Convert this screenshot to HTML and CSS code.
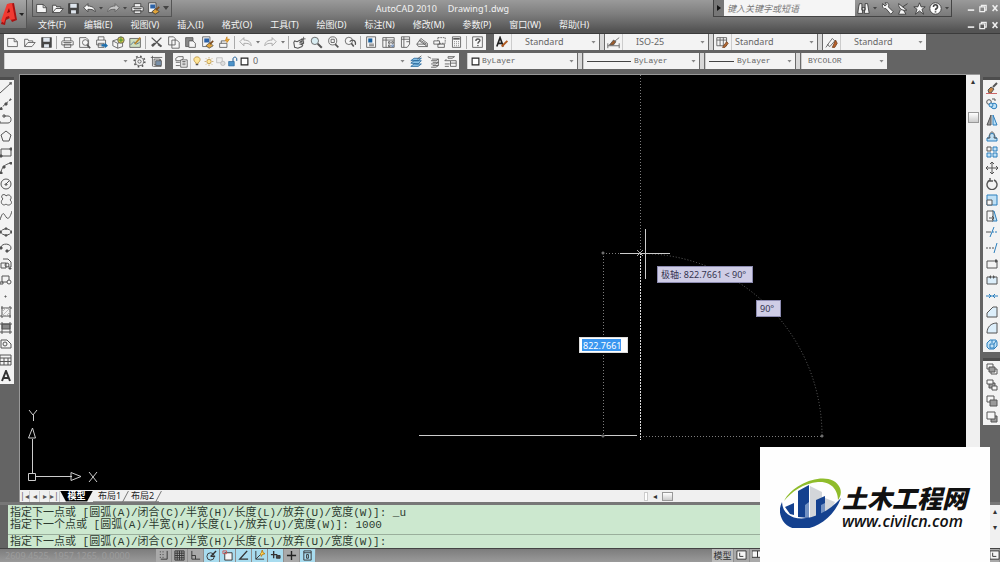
FILE: index.html
```html
<!DOCTYPE html>
<html lang="zh-CN">
<head>
<meta charset="utf-8">
<title>AutoCAD 2010 - Drawing1.dwg</title>
<link rel="stylesheet" href="styles.css">
</head>
<body>
<svg class="defs" aria-hidden="true">
<symbol id="new" viewBox="0 0 16 16"><path class="p" d="M2 3h8l4 4v6H2z"/><path d="M10 3v4h4"/></symbol>
<symbol id="open" viewBox="0 0 16 16"><path class="p" d="M2 13V4h4l1 2h5v2"/><path class="p" d="M2 13l4-5h9l-4 5z"/></symbol>
<symbol id="save" viewBox="0 0 16 16"><path class="d" d="M2 2h12v12H2z"/><path fill="#dfe6ee" stroke="none" d="M4 2h8v5H4zM5 10h6v4H5z"/></symbol>
<symbol id="undo" viewBox="0 0 16 16"><path class="p" d="M1 7l5-5v3c6 0 9 3 9 7-2-3-5-3-9-3v3z"/></symbol>
<symbol id="redo" viewBox="0 0 16 16"><path class="p" d="M15 7l-5-5v3c-6 0-9 3-9 7 2-3 5-3 9-3v3z"/></symbol>
<symbol id="print" viewBox="0 0 16 16"><path class="p" d="M4 6V2h8v4M2 6h12q1 0 1 1v4H1V7q0-1 1-1zM4 10h8v4H4z"/><path d="M3 8h10"/></symbol>
<symbol id="preview" viewBox="0 0 16 16"><path class="p" d="M2 2h8l3 3v9H2z"/><circle class="p" cx="9" cy="8" r="3.5"/><path stroke-width="2" d="M11 11l4 4"/></symbol>
<symbol id="publish" viewBox="0 0 16 16"><path class="p" d="M4 5V1h7v4M2 5h11v6H2zM4 9h7v5H4z"/><path fill="#1d6fae" stroke="none" d="M8 10h4V8l4 4-4 3v-2H8z"/></symbol>
<symbol id="dwf" viewBox="0 0 16 16"><path class="p" d="M1 6l6-2 6 3v6l-6 2-6-3z"/><path d="M1 6l6 3v6M7 9l6-2"/><circle cx="11" cy="5" r="4" fill="#d9c54a"/><path stroke="#2f8a3a" d="M8 5h6M11 1v7"/></symbol>
<symbol id="markup" viewBox="0 0 16 16"><path fill="#cfe0c0" d="M1 3h13v11H1z"/><path stroke="#468" d="M2 11l4-4 3 3 4-2"/><path stroke="#b8862b" stroke-width="2" d="M7 10l7-8"/></symbol>
<symbol id="cut" viewBox="0 0 16 16"><path stroke-width="1.6" d="M2 2l12 11M14 2L3 13"/><path stroke-width="2.400" d="M2 12l4-3M14 13l-4-3"/></symbol>
<symbol id="copy" viewBox="0 0 16 16"><path class="p" d="M2 1h6l2 2v8H2zM6 5h6l3 3v7H6z"/></symbol>
<symbol id="paste" viewBox="0 0 16 16"><path fill="#888" d="M2 2h9v11H2z"/><path class="p" d="M6 6h5l3 3v5H6z"/></symbol>
<symbol id="match" viewBox="0 0 16 16"><path class="p" d="M2 1h9v12H2z"/><path fill="#2b62a8" stroke="none" d="M4 3h6v5H4z"/><path fill="#e0a43a" d="M6 12l5-4 4 4-5 3z"/><path stroke="#7a4a1e" stroke-width="2" d="M11 10l4-4"/></symbol>
<symbol id="block" viewBox="0 0 16 16"><path class="p" d="M2 9h9v5H2z"/><path d="M4 9V6h5"/><path fill="#f0b040" stroke="#c88420" d="M11 1v3h3l-3 4V6H9z"/></symbol>
<symbol id="pan" viewBox="0 0 16 16"><path class="p" stroke-width="1.300" d="M1 8l1-2 3 1 6-3 1 1-4 3 5-1v2l-4 1 3 1-1 2-5 2-4-1z"/><path d="M13 1v5M10.500 3.500h5"/></symbol>
<symbol id="zoom" viewBox="0 0 16 16"><circle fill="#d9edf2" cx="6" cy="6" r="4.500"/><path stroke-width="2.400" d="M9.500 9.500l5 5"/></symbol>
<symbol id="zoomw" viewBox="0 0 16 16"><circle class="p" cx="7" cy="6" r="5"/><path d="M5 4h4v4H5z"/><path stroke-width="2" d="M10 10l4 4"/></symbol>
<symbol id="zoomp" viewBox="0 0 16 16"><circle class="p" cx="6" cy="6" r="4.500"/><path stroke-width="2" d="M9 9l3 4"/><path stroke-width="1.500" d="M7 7c4-4 8-1 7 4"/></symbol>
<symbol id="props" viewBox="0 0 16 16"><path class="p" d="M2 1h11v13H2z"/><path fill="#195f9d" stroke="none" d="M4 3h5v5H4z"/><path d="M5 10h6M5 12h6"/></symbol>
<symbol id="dc" viewBox="0 0 16 16"><path class="p" d="M1 2h14v12H1z"/><path d="M1 5h14M5 2v12M8 7h2v2H8zM12 7h2v2h-2zM8 11h2v2H8z"/><path stroke="#57a" d="M12 11h2v2h-2z"/></symbol>
<symbol id="palette" viewBox="0 0 16 16"><path class="p" d="M3 1h10v9l-3 4H3z"/><path d="M6 1v13M3 4h10M9 7h4"/></symbol>
<symbol id="sheet" viewBox="0 0 16 16"><path class="p" d="M1 10l5-7 8 6v4H3z"/><path d="M1 10h9l4 3M4 6l8 5M5 5l8 5"/></symbol>
<symbol id="sset" viewBox="0 0 16 16"><path class="p" d="M6 2h9v7H6z" stroke-dasharray="2 1"/><path class="p" d="M1 6h7v4H1zM6 10h8v4H6z"/></symbol>
<symbol id="calc" viewBox="0 0 16 16"><path class="p" d="M3 1h10v13H3z"/><path stroke-width="2" d="M4 3.500h8"/><path stroke-dasharray="1 1.500" d="M5 7h7M5 9.500h7M5 12h7"/></symbol>
<symbol id="qmark" viewBox="0 0 16 16"><path class="p" d="M2 1h12v13H2z"/><path stroke-width="1.700" d="M6 6c0-3 5-3 5-.5C11 7 8.500 7 8.500 9.500M8.500 11v1.500"/></symbol>
<symbol id="tstyle" viewBox="0 0 16 16"><path stroke="#222" stroke-width="2" d="M1 13L5 2l4 11M3 9h5"/><path stroke="#b05a20" stroke-width="2.400" d="M7 13l7-7"/></symbol>
<symbol id="dstyle" viewBox="0 0 16 16"><path d="M1 9v6M15 9v6M1 12h14"/><path fill="#9a5b2c" d="M3 11l5-6 3 2-3 4z"/><path d="M10 6l5-4"/></symbol>
<symbol id="table2" viewBox="0 0 16 16"><path class="p" d="M1 2h12v10H1z"/><path d="M1 5h12M5 2v10M9 2v10"/><path fill="#b66b34" stroke="#74401c" d="M8 14l5-7 2 2-4 5z"/></symbol>
<symbol id="mstyle" viewBox="0 0 16 16"><path class="p" d="M3 11l6-8 3 3-6 7z"/><path d="M1 14l3-4"/><path fill="#b8602a" stroke="#74401c" d="M9 14l4-9 2 4-3 5z"/></symbol>
<symbol id="gear" viewBox="0 0 16 16"><circle cx="8" cy="8" r="5"/><circle cx="8" cy="8" r="2"/><circle cx="8" cy="8" r="6.500" stroke-dasharray="2 3.100" stroke-width="2"/></symbol>
<symbol id="ws" viewBox="0 0 16 16"><path d="M1 3h14M3 1v13M5 5h7v7H5zM13 5v9M4 14h10"/><path fill="#7990a8" d="M7 7h7v6H7z"/></symbol>
<symbol id="layers" viewBox="0 0 16 16"><path class="p" d="M1 4l3-2h6v3l-3 2H1zM1 9h5M1 13h5"/><path class="p" d="M7 6h8v9H7z"/><path d="M9 8h4M9 10h4M9 12h4"/></symbol>
<symbol id="bulb" viewBox="0 0 16 16"><path fill="#ffe69a" stroke="#a87a20" d="M6 11c0-2-3-3-3-6 0-6 10-6 10 0 0 3-3 4-3 6z"/><path stroke-width="2" d="M6 13h4"/></symbol>
<symbol id="sun" viewBox="0 0 16 16"><circle fill="#ffe69a" stroke="#a87a20" cx="8" cy="8" r="3.500"/><path stroke="#a87a20" d="M8 1v2M8 13v2M1 8h2M13 8h2M3 3l1.500 1.500M11.500 11.500L13 13M3 13l1.500-1.500M11.500 4.500L13 3"/></symbol>
<symbol id="vp" viewBox="0 0 16 16"><path stroke="#aaa" fill="#eee" d="M1 2h9v8H1z"/><circle stroke="#aaa" fill="#ddd" cx="11" cy="11" r="3.500"/></symbol>
<symbol id="lock" viewBox="0 0 16 16"><path stroke="#1d5c94" fill="#4b92c8" d="M1 8h9v7H1z"/><path stroke="#1d5c94" stroke-width="1.600" d="M8 8V4c0-4 6-4 6 0v3"/></symbol>
<symbol id="sq" viewBox="0 0 16 16"><path fill="#fff" stroke="#222" stroke-width="2" d="M2 2h12v12H2z"/></symbol>
<symbol id="lay1" viewBox="0 0 16 16"><path fill="#8cc4e8" stroke="#23659a" d="M1 7l4-3h9l-4 3zM1 10l4-3h9l-4 4zM1 14l4-3h9l-4 3z"/><path d="M9 5l5-4"/></symbol>
<symbol id="lay2" viewBox="0 0 16 16"><path d="M1 2l4 2M6 5h8l-3 2H5M7 9h7l-3 2H5M7 13h7l-3 2H5M14 5v8"/></symbol>
<symbol id="lay3" viewBox="0 0 16 16"><path d="M5 2h8l-3 2H5zM1 7h7M1 11h6M1 14h5M3 5L1 7"/><path class="p" d="M8 7h7v7H8z"/><path d="M8 10h7"/></symbol>
<symbol id="bino" viewBox="0 0 16 16"><path class="p" d="M3 2h3v4l1 8H1l1-8zM10 2h3l2 12H9l1-8zM6 7h4v3H6z"/></symbol>
<symbol id="wrench" viewBox="0 0 16 16"><path class="p" d="M2 2l3 3 2-2-2-2c5-1 5 3 4 5l6 6-3 3-6-7C3 9 1 6 2 2z"/></symbol>
<symbol id="sat" viewBox="0 0 16 16"><path class="p" d="M2 2c0 6 4 9 10 8zM7 6l6-4M4 10l-2 5h9L8 10"/></symbol>
<symbol id="star" viewBox="0 0 16 16"><path class="p" d="M8 1l2 5h5l-4 3 2 6-5-4-5 4 2-6-4-3h5z"/></symbol>
<symbol id="help" viewBox="0 0 16 16"><circle cx="8" cy="8" r="7" fill="#fff"/><path stroke="#444" stroke-width="2" d="M5.500 6c0-4 5-3 5 0C10.500 8 8 8 8 10M8 11.500v1.500"/></symbol>
<symbol id="min" viewBox="0 0 10 10"><path stroke="#eee" stroke-width="2" d="M1 7h8"/></symbol>
<symbol id="max" viewBox="0 0 10 10"><path stroke="#eee" stroke-width="1.500" d="M3 3V1h6v6H7M1 3h6v6H1z"/></symbol>
<symbol id="x" viewBox="0 0 10 10"><path stroke="#eee" stroke-width="2" d="M2 1l6 7M8 1L2 8"/></symbol>
<symbol id="line" viewBox="0 0 12 12"><path d="M0 11L11 1M10 0h2v2h-2z"/></symbol>
<symbol id="cline" viewBox="0 0 12 12"><path d="M0 11L11 1" stroke-dasharray="3 1"/><path class="d" d="M5 5h2v2H5zM10 1h1v1h-1zM0 10h2v2H0z"/></symbol>
<symbol id="pline" viewBox="0 0 12 12"><path d="M4 2h4c4 0 4 7 0 7H0V7M3 1h2v2H3z"/></symbol>
<symbol id="poly" viewBox="0 0 12 12"><path d="M6 1l5 4-2 6H3L1 5z"/></symbol>
<symbol id="rect" viewBox="0 0 12 12"><path d="M1 3h10v7H1z"/><path class="d" d="M10 2h2v2h-2zM0 9h2v2H0z"/></symbol>
<symbol id="arc" viewBox="0 0 12 12"><path d="M1 11C1 6 5 2 11 1"/><path class="d" d="M0 10h2v2H0zM3 4h2v2H3zM10 0h2v2h-2z"/></symbol>
<symbol id="circ" viewBox="0 0 12 12"><circle cx="6" cy="6" r="5"/><path d="M6 6l3-3M5 6h2v1H5z"/></symbol>
<symbol id="cloud" viewBox="0 0 12 12"><path d="M3 5C-1 1 5-1 6 2c3-3 7 1 4 4 4 3-1 7-4 4-3 3-7-2-3-5z"/></symbol>
<symbol id="spl" viewBox="0 0 12 12"><path d="M0 10C3 0 4 4 6 7s4 1 6-6"/></symbol>
<symbol id="ell" viewBox="0 0 12 12"><ellipse cx="6" cy="6" rx="5" ry="3"/><path class="d" d="M5 2h2v1H5zM0 5h1v2H0zM11 5h1v2h-1zM5 9h2v1H5z"/></symbol>
<symbol id="ella" viewBox="0 0 12 12"><path d="M1 5c1-4 10-4 10 1 0 2-2 3-4 3"/><path class="d" d="M0 5h2v2H0zM6 8h2v2H6z"/></symbol>
<symbol id="ins" viewBox="0 0 12 12"><path d="M3 1h5l3 3v5H8M1 5h5v5H1z"/><circle cx="7" cy="7" r="2"/><path class="d" d="M9 10h2v1H9z"/></symbol>
<symbol id="mkb" viewBox="0 0 12 12"><path d="M2 2h7v6H2zM0 8h3v2H0z"/><circle class="p" cx="9" cy="8" r="2"/></symbol>
<symbol id="pt" viewBox="0 0 12 12"><path d="M5 6h1v1H5z"/></symbol>
<symbol id="hatch" viewBox="0 0 12 12"><path d="M1 2h11M0 10h11M2 0v12M10 0v12"/><path stroke="#bbb" d="M2 10l8-8M2 6l4-4M6 10l4-4"/></symbol>
<symbol id="grad" viewBox="0 0 12 12"><path fill="#888" d="M2 2h8v5H2z"/><path d="M0 2h12M0 10h12M2 0v12M10 0v12"/></symbol>
<symbol id="region" viewBox="0 0 12 12"><path d="M1 2h6l4 4v4H1z"/><circle cx="5" cy="6" r="2"/></symbol>
<symbol id="tbl" viewBox="0 0 12 12"><path d="M0 1h11v10H0zM0 4h11M4 4v7M8 4v7M0 7.500h11"/></symbol>
<symbol id="txt" viewBox="0 0 12 12"><path stroke="#333" stroke-width="2" d="M2 11L6 1l4 10M3 8h6"/></symbol>
<symbol id="erase" viewBox="0 0 12 12"><path fill="#c58345" d="M2 8l3-3 3 2-3 4H3z"/><path stroke="#555" stroke-width="2" d="M7 5l4-4"/><path stroke="#c66" d="M0 11.500h11"/></symbol>
<symbol id="cp" viewBox="0 0 12 12"><circle cx="3" cy="4" r="2.300"/><circle class="b" cx="8" cy="8" r="2.800"/><path d="M6 1h3v2"/><circle class="b" cx="5" cy="7" r="2"/></symbol>
<symbol id="mir" viewBox="0 0 12 12"><path fill="#999" d="M5 1v10H1z"/><path class="b" d="M7 1v10h4z"/></symbol>
<symbol id="off" viewBox="0 0 12 12"><path class="b" d="M1 11V8h2C2 2 10 2 9 8h2v3z"/><path d="M1 8h3C2 0 10 0 8 8h3"/></symbol>
<symbol id="arr" viewBox="0 0 12 12"><path d="M1 1h4v4H1z"/><path class="b" d="M7 1h4v4H7zM1 7h4v4H1zM7 7h4v4H7z"/></symbol>
<symbol id="mov" viewBox="0 0 12 12"><path d="M6 0v12M0 6h12M4 2l2-2 2 2M4 10l2 2 2-2M2 4L0 6l2 2M10 4l2 2-2 2"/></symbol>
<symbol id="rot" viewBox="0 0 12 12"><path stroke-width="1.400" d="M4 2a5 5 0 1 0 4 0M4 0v3h3"/></symbol>
<symbol id="scl" viewBox="0 0 12 12"><path class="b" d="M1 1h10v10H1z"/><path class="p" d="M1 6h5v5H1z"/></symbol>
<symbol id="str" viewBox="0 0 12 12"><path class="b" d="M6 1h2l3 10H6z"/><path class="p" d="M1 1h6v10H1z"/><path d="M3 8h5M6 6l2 2-2 2"/></symbol>
<symbol id="trim" viewBox="0 0 12 12"><path d="M0 6h5"/><path stroke="#2b7fbd" d="M4 11L8 1"/><path stroke="#2b7fbd" stroke-dasharray="2 1" d="M6 6h6"/></symbol>
<symbol id="ext" viewBox="0 0 12 12"><path stroke-dasharray="2 1" d="M0 6h8"/><path stroke="#2b7fbd" d="M8 11l3-10"/></symbol>
<symbol id="bpt" viewBox="0 0 12 12"><path d="M8 3H1v7h10V3"/><path class="d" d="M9 2h2v2H9z"/></symbol>
<symbol id="brk" viewBox="0 0 12 12"><path class="pb" d="M4 3H1v7h10V3H8"/><path class="d" d="M4 2h1v2H4zM7 2h1v2H7z"/></symbol>
<symbol id="join" viewBox="0 0 12 12"><path stroke="#2b7fbd" d="M0 6h12M3 4l2 2-2 2M9 4L7 6l2 2"/></symbol>
<symbol id="cham" viewBox="0 0 12 12"><path class="pb" d="M1 11V7l6-6h4v10z"/></symbol>
<symbol id="fil" viewBox="0 0 12 12"><path class="pb" d="M1 11C1 5 5 1 11 1v10z"/></symbol>
<symbol id="expl" viewBox="0 0 12 12"><path class="b" d="M1 5l3-3h6l1 2v4l-3 3H3L1 9zM4 6h4v4H4zM6 2v3M10 3L8 6"/></symbol>
<symbol id="o1" viewBox="0 0 12 12"><path class="p" d="M1 1h6v5H1zM5 6h6v5H5z"/><path fill="#999" d="M3 4h6v5H3z"/></symbol>
<symbol id="o2" viewBox="0 0 12 12"><path fill="#999" d="M3 4h6v5H3z"/><path class="p" d="M1 1h6v4H1zM6 7h5v4H6z"/></symbol>
<symbol id="o3" viewBox="0 0 12 12"><path class="p" d="M1 1h7v6H1z"/><path fill="#999" d="M4 5h7v6H4z"/></symbol>
<symbol id="o4" viewBox="0 0 12 12"><path fill="#999" d="M5 5h6v6H5z"/><path class="p" d="M1 1h8v7H1z"/></symbol>
<symbol id="snap" viewBox="0 0 12 12"><path stroke-dasharray="1 2" d="M2 2h6M2 5h6M2 8h6"/><path d="M10 1v9H3"/></symbol>
<symbol id="grid" viewBox="0 0 12 12"><path d="M1 1h10v10H1zM1 3.500h10M1 6h10M1 8.500h10M3.500 1v10M6 1v10M8.500 1v10"/></symbol>
<symbol id="orth" viewBox="0 0 12 12"><path d="M2 1v9h9M2 6h4v4"/></symbol>
<symbol id="polar" viewBox="0 0 12 12"><circle cx="5" cy="7" r="4"/><path stroke-width="1.500" d="M5 7l6-6M5 7h5"/></symbol>
<symbol id="osn" viewBox="0 0 12 12"><path class="p" d="M3 3h8v8H3z"/><path stroke="#c55" d="M1 1h4v3H1z"/></symbol>
<symbol id="otr" viewBox="0 0 12 12"><path stroke-width="1.500" d="M10 1L2 10h9"/></symbol>
<symbol id="ducs" viewBox="0 0 12 12"><path d="M2 1v9h9M2 10l5-5"/><path fill="#ffd44f" stroke="#b87b18" d="M9 0l1 3 2 1-3 1-1 2-1-3 1-1z"/></symbol>
<symbol id="dyn" viewBox="0 0 12 12"><path stroke-width="1.500" d="M1 5h7M4 1v8"/><path class="d" d="M7 6h4v3H7z"/></symbol>
<symbol id="plus" viewBox="0 0 12 12"><path stroke="#222" stroke-width="1.500" d="M1 6h10M6 1v10"/></symbol>
<symbol id="qp" viewBox="0 0 12 12"><path d="M2 1h8v10H2zM2 3h8M5 5h2v4H5z"/></symbol>
<symbol id="lay" viewBox="0 0 12 12"><path class="p" d="M1 1h10v9H1z"/><path d="M4 3v4h4"/></symbol>
<symbol id="views" viewBox="0 0 12 12"><path class="p" d="M0 1h6v7H0zM6 1h6v7H6z"/></symbol>
</svg>

<header class="header">
  <button class="app" aria-label="应用程序菜单"><svg viewBox="0 0 26 28"><path fill="#a81212" d="M1 24L8 4l6-1 3 17-5 2-2-4-4 2-1 5z"/><path fill="#f03a32" d="M1 21L7 4l5-1 3 16-5 1-1-4-3 1-2 6z"/><path fill="#7c0c0c" d="M7 13l2-5 1 4z"/><path fill="#222" d="M19 13h5l-2 3z"/></svg></button>
  <div class="head-main">
    <div class="title-row">
      <div class="qat">
        <button aria-label="新建"><svg><use href="#new"/></svg></button><button aria-label="打开"><svg><use href="#open"/></svg></button><button aria-label="保存"><svg><use href="#save"/></svg></button><button aria-label="放弃"><svg><use href="#undo"/></svg></button><i class="caret"></i><button class="dim" aria-label="重做"><svg><use href="#redo"/></svg></button><i class="caret"></i><button aria-label="打印"><svg><use href="#print"/></svg></button><button aria-label="特性匹配"><svg><use href="#match"/></svg></button><i class="caret dark"></i>
      </div>
      <h1 class="title"><span>AutoCAD 2010</span><span>Drawing1.dwg</span></h1>
      <div class="info">
        <button class="expand" aria-label="展开"></button>
        <input class="search" type="text" aria-label="搜索" placeholder="键入关键字或短语">
        <button aria-label="查找"><svg><use href="#bino"/></svg></button><i class="caret"></i><button aria-label="速博应用"><svg><use href="#wrench"/></svg></button><button aria-label="通讯中心"><svg><use href="#sat"/></svg></button><button aria-label="收藏夹"><svg><use href="#star"/></svg></button><button aria-label="帮助"><svg><use href="#help"/></svg></button><i class="caret"></i>
      </div>
      <div class="win"><button aria-label="最小化"><svg><use href="#min"/></svg></button><button aria-label="还原"><svg><use href="#max"/></svg></button><button aria-label="关闭"><svg><use href="#x"/></svg></button></div>
    </div>
    <div class="menu-row">
      <nav class="menu"><button>文件(F)</button><button>编辑(E)</button><button>视图(V)</button><button>插入(I)</button><button>格式(O)</button><button>工具(T)</button><button>绘图(D)</button><button>标注(N)</button><button>修改(M)</button><button>参数(P)</button><button>窗口(W)</button><button>帮助(H)</button></nav>
      <div class="win"><button aria-label="最小化图形"><svg><use href="#min"/></svg></button><button aria-label="还原图形"><svg><use href="#max"/></svg></button><button aria-label="关闭图形"><svg><use href="#x"/></svg></button></div>
    </div>
  </div>
</header>

<section class="bars">
  <div class="bar-row">
    <div class="strip">
      <button aria-label="新建"><svg><use href="#new"/></svg></button><button aria-label="打开"><svg><use href="#open"/></svg></button><button aria-label="保存"><svg><use href="#save"/></svg></button><i class="sep"></i><button aria-label="打印"><svg><use href="#print"/></svg></button><button aria-label="打印预览"><svg><use href="#preview"/></svg></button><button aria-label="发布"><svg><use href="#publish"/></svg></button><button aria-label="三维 DWF"><svg><use href="#dwf"/></svg></button><button aria-label="标记"><svg><use href="#markup"/></svg></button><i class="sep"></i><button aria-label="剪切"><svg><use href="#cut"/></svg></button><button aria-label="复制"><svg><use href="#copy"/></svg></button><button aria-label="粘贴"><svg><use href="#paste"/></svg></button><button aria-label="特性匹配"><svg><use href="#match"/></svg></button><button aria-label="块编辑器"><svg><use href="#block"/></svg></button><i class="sep"></i><button class="dim" aria-label="放弃"><svg><use href="#undo"/></svg></button><i class="caret"></i><button class="dim" aria-label="重做"><svg><use href="#redo"/></svg></button><i class="caret"></i><i class="sep"></i><button aria-label="平移"><svg><use href="#pan"/></svg></button><button aria-label="实时缩放"><svg><use href="#zoom"/></svg></button><button aria-label="窗口缩放"><svg><use href="#zoomw"/></svg></button><button aria-label="缩放上一个"><svg><use href="#zoomp"/></svg></button><i class="sep"></i><button aria-label="特性"><svg><use href="#props"/></svg></button><button aria-label="设计中心"><svg><use href="#dc"/></svg></button><button aria-label="工具选项板"><svg><use href="#palette"/></svg></button><button aria-label="图纸集"><svg><use href="#sheet"/></svg></button><button aria-label="标记集"><svg><use href="#sset"/></svg></button><button aria-label="计算器"><svg><use href="#calc"/></svg></button><i class="sep"></i><button aria-label="帮助"><svg><use href="#qmark"/></svg></button>
    </div>
    <div class="strip">
      <button aria-label="文字样式"><svg><use href="#tstyle"/></svg></button><label class="combo w88"><select aria-label="文字样式"><option>Standard</option></select></label><i class="grip"></i>
      <button aria-label="标注样式"><svg><use href="#dstyle"/></svg></button><label class="combo w86"><select aria-label="标注样式"><option>ISO-25</option></select></label><i class="grip"></i>
      <button aria-label="表格样式"><svg><use href="#table2"/></svg></button><label class="combo w86 tight"><select aria-label="表格样式"><option>Standard</option></select></label><i class="grip"></i>
      <button aria-label="多重引线样式"><svg><use href="#mstyle"/></svg></button><label class="combo w86"><select aria-label="多重引线样式"><option>Standard</option></select></label>
    </div>
  </div>
  <div class="bar-row">
    <div class="strip">
      <label class="combo w127"><select aria-label="工作空间"><option></option></select></label><button aria-label="工作空间设置"><svg><use href="#gear"/></svg></button><button aria-label="我的工作空间"><svg><use href="#ws"/></svg></button>
    </div>
    <div class="strip">
      <button aria-label="图层特性"><svg><use href="#layers"/></svg></button>
      <label class="combo layer"><span class="state"><svg><use href="#bulb"/></svg><svg><use href="#sun"/></svg><svg><use href="#vp"/></svg><svg><use href="#lock"/></svg><svg><use href="#sq"/></svg></span><select aria-label="图层"><option>0</option></select></label>
      <button aria-label="置为当前"><svg><use href="#lay1"/></svg></button><button aria-label="上一个图层"><svg><use href="#lay2"/></svg></button><button aria-label="图层状态"><svg><use href="#lay3"/></svg></button>
    </div>
    <div class="strip mono">
      <label class="combo color"><span class="state"><svg><use href="#sq"/></svg></span><select aria-label="颜色"><option>ByLayer</option></select></label><i class="grip"></i>
      <label class="combo ltype"><i class="rule"></i><select aria-label="线型"><option>ByLayer</option></select></label><i class="grip"></i>
      <label class="combo lweight"><i class="rule short"></i><select aria-label="线宽"><option>ByLayer</option></select></label><i class="grip"></i>
      <label class="combo w86 plot"><select aria-label="打印样式"><option>BYCOLOR</option></select></label>
    </div>
  </div>
</section>

<main class="work">
  <aside class="side left"><div class="tools">
    <button aria-label="直线"><svg><use href="#line"/></svg></button><button aria-label="构造线"><svg><use href="#cline"/></svg></button><button aria-label="多段线"><svg><use href="#pline"/></svg></button><button aria-label="正多边形"><svg><use href="#poly"/></svg></button><button aria-label="矩形"><svg><use href="#rect"/></svg></button><button aria-label="圆弧"><svg><use href="#arc"/></svg></button><button aria-label="圆"><svg><use href="#circ"/></svg></button><button aria-label="修订云线"><svg><use href="#cloud"/></svg></button><button aria-label="样条曲线"><svg><use href="#spl"/></svg></button><button aria-label="椭圆"><svg><use href="#ell"/></svg></button><button aria-label="椭圆弧"><svg><use href="#ella"/></svg></button><button aria-label="插入块"><svg><use href="#ins"/></svg></button><button aria-label="创建块"><svg><use href="#mkb"/></svg></button><button aria-label="点"><svg><use href="#pt"/></svg></button><button aria-label="图案填充"><svg><use href="#hatch"/></svg></button><button aria-label="渐变色"><svg><use href="#grad"/></svg></button><button aria-label="面域"><svg><use href="#region"/></svg></button><button aria-label="表格"><svg><use href="#tbl"/></svg></button><button aria-label="多行文字"><svg><use href="#txt"/></svg></button>
  </div></aside>
  <section class="doc">
    <div class="view">
      <div class="canvas">
        <svg class="drawing" viewBox="0 0 946 415" preserveAspectRatio="xMinYMin meet">
          <g fill="none" stroke="#7c7c7c" stroke-dasharray="1 2"><path d="M583.500 178v183M583 178.500h38M620.500 0v178M620 361.500h182"/><path d="M620 178.500A182 182 0 0 1 802 360.500" stroke="#666"/></g>
          <path stroke="#ddd" stroke-dasharray="2 1" d="M620.500 178v187"/>
          <path stroke="#ccc" d="M399 360.500h218M600 178.500h50M625.500 154v50"/>
          <path stroke="#aaa" d="M617 175l6 6M623 175l-6 6"/>
          <path fill="#bbb" d="M582 177h2v2h-2zM582 360h2v2h-2zM801 360h2v2h-2z"/>
          <g fill="none" stroke="#ccc"><path d="M8.500 398.500h7v7h-7zM12.500 398v-34M16 401.500h36M12.500 353l-4 10h7zM61 401.500l-10-4v8zM9 335l4 5 4-5M13.500 340v6M69 397l8 10M77 397l-8 10"/></g>
        </svg>
        <div class="tip polar">极轴: 822.7661 &lt; 90°</div>
        <div class="tip angle">90°</div>
        <input class="length" type="text" aria-label="长度" value="822.7661">
      </div>
      <div class="tabs">
        <button class="nav" aria-label="第一个">|◂</button><button class="nav" aria-label="上一个">◂</button><button class="nav" aria-label="下一个">▸</button><button class="nav" aria-label="最后一个">▸|</button>
        <button class="tab active">模型</button><button class="tab">布局1</button><button class="tab">布局2</button>
        <div class="hscroll"><i class="split"></i><span>◂</span><i class="thumb"></i></div>
      </div>
    </div>
    <div class="vscroll"><span>▴</span><i class="thumb"></i></div>
  </section>
  <aside class="side right"><div class="tools">
    <button aria-label="删除"><svg><use href="#erase"/></svg></button><button aria-label="复制"><svg><use href="#cp"/></svg></button><button aria-label="镜像"><svg><use href="#mir"/></svg></button><button aria-label="偏移"><svg><use href="#off"/></svg></button><button aria-label="阵列"><svg><use href="#arr"/></svg></button><button aria-label="移动"><svg><use href="#mov"/></svg></button><button aria-label="旋转"><svg><use href="#rot"/></svg></button><button aria-label="缩放"><svg><use href="#scl"/></svg></button><button aria-label="拉伸"><svg><use href="#str"/></svg></button><button aria-label="修剪"><svg><use href="#trim"/></svg></button><button aria-label="延伸"><svg><use href="#ext"/></svg></button><button aria-label="打断于点"><svg><use href="#bpt"/></svg></button><button aria-label="打断"><svg><use href="#brk"/></svg></button><button aria-label="合并"><svg><use href="#join"/></svg></button><button aria-label="倒角"><svg><use href="#cham"/></svg></button><button aria-label="圆角"><svg><use href="#fil"/></svg></button><button aria-label="分解"><svg><use href="#expl"/></svg></button>
  </div><div class="tools">
    <button aria-label="前置"><svg><use href="#o1"/></svg></button><button aria-label="后置"><svg><use href="#o2"/></svg></button><button aria-label="置于对象之上"><svg><use href="#o3"/></svg></button><button aria-label="置于对象之下"><svg><use href="#o4"/></svg></button>
  </div></aside>
</main>

<section class="command">
  <div class="cmd-text">
    <div class="history"><p>指定下一点或 [圆弧(A)/闭合(C)/半宽(H)/长度(L)/放弃(U)/宽度(W)]: _u</p><p>指定下一个点或 [圆弧(A)/半宽(H)/长度(L)/放弃(U)/宽度(W)]: 1000</p></div>
    <label class="prompt">指定下一点或 [圆弧(A)/闭合(C)/半宽(H)/长度(L)/放弃(U)/宽度(W)]:<input type="text" aria-label="命令行"></label>
  </div>
  <div class="cmd-scroll"><span>▴</span><span>▾</span></div>
</section>

<footer class="status">
  <span class="coords">2609.4525, 1957.1265, 0.0000</span>
  <div class="toggles"><button aria-label="捕捉"><svg><use href="#snap"/></svg></button><button aria-label="栅格"><svg><use href="#grid"/></svg></button><button aria-label="正交"><svg><use href="#orth"/></svg></button><button class="on" aria-label="极轴"><svg><use href="#polar"/></svg></button><button class="on" aria-label="对象捕捉"><svg><use href="#osn"/></svg></button><button class="on" aria-label="对象追踪"><svg><use href="#otr"/></svg></button><button class="on" aria-label="动态 UCS"><svg><use href="#ducs"/></svg></button><button class="on" aria-label="动态输入"><svg><use href="#dyn"/></svg></button><button aria-label="线宽"><svg><use href="#plus"/></svg></button><button class="on" aria-label="快捷特性"><svg><use href="#qp"/></svg></button></div>
  <div class="layouts"><button class="model">模型</button><button aria-label="布局"><svg><use href="#lay"/></svg></button><button aria-label="快速查看"><svg><use href="#views"/></svg></button></div>
  <button class="clean" aria-label="全屏显示"><svg><use href="#lay"/></svg></button>
</footer>

<aside class="brand">
  <svg viewBox="0 0 62 50" aria-hidden="true">
    <path fill="#d3d6da" d="M30 8l12 6v24l-12 2zM45 20l10 4-4 8-6 4z"/>
    <path fill="#14418f" d="M18 13l11-6v33l-11-1zM36 22l9-4v17l-9 4zM5 29l9-4v12l-4-1z"/>
    <path fill="#7291c2" d="M25 27l4-3v16l-4-1zM41 27l4-2v10l-4 2z"/>
    <path fill="#8fbc2b" d="M4 23C14 3 52-9 60 10c2 5 0 9-2 12 0-8-5-19-20-18C24 5 11 14 4 23z"/>
    <path fill="#14418f" d="M2 24c1 23 36 22 59-4C49 52 13 59 3 43-1 36-1 30 2 24z"/>
  </svg>
  <div class="brand-text"><strong>土木工程网</strong><span>www.civilcn.com</span></div>
</aside>
</body>
</html>
```
FILE: styles.css
```css
* { box-sizing: border-box; }
html, body { height: 100%; margin: 0; }
body { display: flex; flex-direction: column; overflow: hidden; background: #646464; color: #333; font: 9px/12px "Noto Sans", "Noto Sans CJK SC", sans-serif; }
button, input, select { font: inherit; color: inherit; margin: 0; padding: 0; border: 0; background: none; border-radius: 0; outline: 0; }
button { display: flex; align-items: center; justify-content: center; flex: none; }
svg { display: block; fill: none; stroke: #555; stroke-width: 1; flex: none; }
.defs { position: absolute; width: 0; height: 0; }
.p { fill: #f6f6f6; }
.d { fill: #444; }
.b { fill: #bfe0f5; stroke: #2b7fbd; }
.pb { fill: #dceefa; }
.caret { flex: none; width: 8px; height: 3px; background: #777; clip-path: polygon(20% 0, 80% 0, 50% 100%); }
.caret.dark { background: #111; width: 10px; height: 4px; }

.header { display: flex; height: 34px; flex: none; background: linear-gradient(#9a9a9a, #7c7c7c 45%, #545454 92%); border-bottom: 1px solid #3b3b3b; }
.app { width: 27px; height: 29px; background: linear-gradient(#a5a5a5, #747474); border: 1px solid #555; border-top: 0; border-left: 0; }
.app svg { width: 26px; height: 28px; stroke: none; }
.head-main { flex: 1; min-width: 0; }
.title-row, .menu-row { display: flex; align-items: center; height: 17px; }
.menu-row { height: 16px; }
.qat { display: flex; align-items: center; height: 17px; margin-left: 5px; border: 1px solid #555; border-top: 0; background: linear-gradient(#999, #7a7a7a); }
.qat button { width: 16px; }
.qat svg { width: 13px; height: 13px; stroke: #3a3a3a; }
.qat .caret, .info .caret { background: #444; }
.dim { opacity: .55; }
.title { flex: 1; display: flex; justify-content: center; gap: 11px; margin: 0; font-size: 9px; font-weight: 400; color: #f2f2f2; }
.info { display: flex; align-items: center; height: 17px; border: 1px solid #444; border-top: 0; }
.expand { width: 10px; height: 16px; background: #777; }
.expand::before { content: ""; width: 4px; height: 6px; background: #111; clip-path: polygon(0 0, 100% 50%, 0 100%); }
.search { width: 131px; height: 16px; padding-left: 3px; background: #f5f5f5; font-style: italic; }
.search::placeholder { color: #777; opacity: 1; }
.info button:not(.expand) { width: 16px; }
.info svg { width: 13px; height: 13px; stroke: #333; }
.win { display: flex; gap: 2px; margin-left: 14px; width: 34px; }
.win button { width: 10px; }
.win svg { width: 8px; height: 9px; }
.menu { display: flex; gap: 18px; flex: 1; padding-left: 11px; color: #f4f4f4; }

.bars { flex: none; display: flex; flex-direction: column; gap: 3px; padding: 0 4px 5px; }
.bar-row { display: flex; gap: 8px; height: 16px; }
.strip { display: flex; align-items: center; height: 16px; background: #f3f3f3; flex: none; }
.strip button { width: 17px; height: 16px; }
.strip button svg { width: 13px; height: 13px; }
.sep { flex: none; width: 1px; height: 13px; margin: 0 2px 0 1px; background: #aaa; }
.grip { flex: none; width: 6px; height: 16px; border: solid #6a6a6a; border-width: 0 1px; background: #d8d8d8; }
.combo { position: relative; display: flex; align-items: center; height: 16px; flex: none; border-left: 1px solid #ccc; padding-left: 13px; color: #666; }
.combo select { appearance: none; flex: 1; min-width: 0; height: 14px; }
.combo::after { content: ""; width: 5px; height: 3px; margin-right: 3px; background: #888; clip-path: polygon(0 0, 100% 0, 50% 100%); }
.w86 { width: 86px; }
.w88 { width: 88px; }
.w127 { width: 127px; }
.tight { padding-left: 3px; }
.layer { width: 218px; padding-left: 1px; }
.state { display: flex; gap: 2px; padding-right: 4px; }
.state svg { width: 10px; height: 11px; }
.state svg:last-child { width: 9px; }
.mono { font: 8px/12px "Liberation Mono", monospace; }
.color { width: 110px; padding-left: 3px; }
.color .state { padding-right: 2px; }
.ltype { width: 116px; padding-left: 3px; }
.lweight { width: 90px; padding-left: 3px; }
.plot { padding-left: 6px; }
.rule { width: 44px; height: 1px; margin-right: 3px; background: #444; }
.rule.short { width: 25px; }

.work { flex: 1; min-height: 0; display: flex; }
.side { flex: none; padding-top: 6px; }
.left { width: 19px; }
.left .tools { width: 14px; }
.right { width: 20px; padding-left: 3px; }
.tools { background: #f3f3f3; margin-bottom: 9px; box-shadow: 0 -3px #4d4d4d; }
.tools button { width: 100%; height: 16px; }
.tools svg { width: 12px; height: 12px; }
.left svg { margin-right: 2px; }
.doc { flex: 1; min-width: 0; display: flex; border: solid #999; border-width: 1px 0 0 1px; }
.view { flex: 1; min-width: 0; display: flex; flex-direction: column; }
.canvas { flex: 1; min-height: 0; position: relative; background: #000; overflow: hidden; }
.drawing { width: 100%; height: 100%; }
.tip { position: absolute; padding: 1px 3px; background: #cfcde6; border: 1px solid #8c8bb0; color: #33334f; white-space: nowrap; line-height: 13px; }
.polar.tip { left: 637px; top: 191px; padding-right: 6px; }
.angle { left: 736px; top: 225px; padding-right: 6px; }
.length { position: absolute; left: 559px; top: 262px; width: 49px; height: 16px; padding: 0 3px; border: 1px solid #ddd; color: #fff; background: linear-gradient(#3a96f0, #3a96f0) no-repeat 2px 1px / 39px 12px #fff; }
.tabs { flex: none; display: flex; align-items: center; height: 12px; background: #f0f0f0; }
.nav { width: 10px; height: 11px; border-right: 1px solid #ccc; font-size: 8px; color: #555; }
.tab { position: relative; width: 33px; height: 11px; color: #222; border-bottom: 1px solid #999; }
.tab::after { content: ""; position: absolute; right: 0; top: 0; width: 1px; height: 11px; background: #777; transform: skewX(-28deg); }
.tab.active { background: #000; color: #fff; font-weight: 700; clip-path: polygon(0 0, 100% 0, 82% 100%, 18% 100%); }
.hscroll { display: flex; align-items: center; gap: 5px; margin-left: auto; width: 322px; font-size: 8px; }
.split { width: 4px; height: 9px; border: 1px solid #ccc; background: #fff; }
.thumb { display: block; width: 11px; height: 9px; background: linear-gradient(#fff, #ccc); border: 1px solid #999; }
.vscroll { width: 14px; background: #f0f0f0; display: flex; flex-direction: column; align-items: center; font-size: 8px; }
.vscroll .thumb { height: 11px; margin-top: 25px; }

.command { flex: none; display: flex; height: 47px; padding-left: 8px; border-top: 3px solid #777; border-bottom: 1px solid #444; }
.cmd-text { flex: 1; display: flex; flex-direction: column; background: #cce8cf; color: #2d3a2f; font: 11px/12px "Liberation Mono", "Noto Sans CJK SC", monospace; white-space: nowrap; }
.history { height: 30px; padding: 2px 2px 0; border-bottom: 1px solid #9aaf9c; }
.history p { margin: 0; }
.prompt { display: flex; padding: 1px 2px 0; }
.prompt input { flex: 1; height: 12px; }
.cmd-scroll { width: 11px; background: #f0f0f0; display: flex; flex-direction: column; align-items: center; gap: 4px; font-size: 8px; }

.status { flex: none; display: flex; align-items: center; height: 13px; background: linear-gradient(#7c7c7c, #9a9a9a); padding-left: 5px; }
.coords { width: 151px; color: #9c9c9c; }
.toggles { display: flex; flex: 1; }
.status button { width: 16px; height: 13px; border-right: 1px solid #8f8f8f; background: #a9a9a9; }
.status button.on { background: #a8dcef; }
.status svg { width: 11px; height: 11px; stroke: #333; }
.layouts { display: flex; margin-right: 234px; }
.status .model { width: 22px; background: #bbb; }
.status .clean { position: absolute; right: 0; bottom: 0; width: 10px; }

.brand { position: fixed; right: 10px; bottom: 0; width: 230px; height: 115px; padding: 31px 0 0 20px; display: flex; background: #fefefe; }
.brand svg { width: 62px; height: 50px; stroke: none; }
.brand-text { display: flex; flex-direction: column; padding-top: 4px; color: #111; font-style: italic; white-space: nowrap; }
.brand-text strong { font: italic 900 25px/30px "Noto Sans CJK SC", sans-serif; }
.brand-text span { font: italic 600 16px/18px "Open Sans", "Noto Sans", sans-serif; }
```
